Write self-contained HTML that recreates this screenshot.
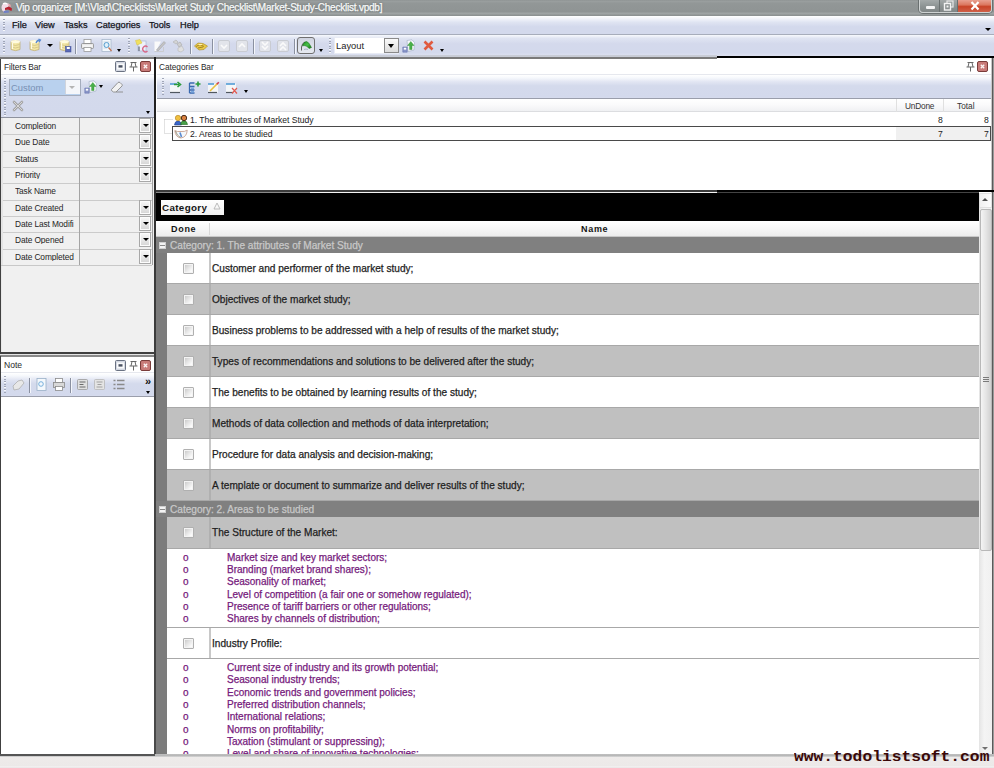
<!DOCTYPE html>
<html><head><meta charset="utf-8">
<style>
*{margin:0;padding:0;box-sizing:border-box}
html,body{width:994px;height:768px;overflow:hidden;background:#ece9e8;font-family:"Liberation Sans",sans-serif;font-size:11px;color:#222}
.a{position:absolute}
.t{position:absolute;white-space:pre;line-height:1}
.k{-webkit-text-stroke:0.25px currentColor}
.p{font-size:8.4px;color:#2a2a2a}
.g{font-size:10.1px;color:#1a1a1a}
.pu{font-size:10px;color:#761a7c}
.grip{position:absolute;width:2px;background:repeating-linear-gradient(#a0a6b8 0 1px,#f8f9fc 1px 1.6px,transparent 1.6px 2.6px)}
.sep{position:absolute;width:2px;background:#8a90a0;border-right:1px solid #f4f6fb}
.arr{position:absolute;width:0;height:0;border-left:3px solid transparent;border-right:3px solid transparent;border-top:3px solid #000}
.cb{position:absolute;width:11px;height:11px;border:1px solid #b0b0b0;border-radius:1px;box-shadow:inset 0 0 0 1px #f4f4f4;background:linear-gradient(135deg,#c4c4c4,#e8e8e8 50%,#fbfbfb 80%);}
.dd{position:absolute;width:12px;height:15px;border:1px solid #a8a8a8;box-shadow:inset 0 0 0 1px #fcfcfc;background:linear-gradient(#f8f8f8,#e8e8e8 50%,#d4d4d4)}
.dd:after{content:"";position:absolute;left:2.5px;top:5px;border-left:3.5px solid transparent;border-right:3.5px solid transparent;border-top:3.5px solid #000}
svg{position:absolute;overflow:visible}
</style></head><body>

<div class="a" style="left:0px;top:0px;width:994px;height:16px;background:linear-gradient(#8e9393 0,#9a9f9f 8%,#929797 20%,#8f9494 72%,#9fa4a4 84%,#898e8e 100%)"></div>
<svg style="left:0px;top:1px" width="14" height="14" viewBox="0 0 14 14"><path d="M1.5 6 Q2 2 6 2 Q9 2 10 4 L7 7 L4 11 Q1.5 10 1.5 6Z" fill="#f2dce6"/><path d="M3 3 Q5 1.5 7 3" stroke="#fff" stroke-width="1.5" fill="none"/><path d="M5 7 L9 5.5 L12 7.5 L11.5 10 L8 8.5 L5 9Z" fill="#b8202e"/><path d="M8 3 L10.5 3.5 L11 6 L9 5.5Z" fill="#e8a0a8"/><path d="M3.5 10 L8.5 9.5 L9 11.5 L4 12Z" fill="#7080c8"/></svg>
<div class="t k" style="left:16px;top:3px;font-size:10px;letter-spacing:-0.22px;color:#f8fafa;text-shadow:0 0 2px #5a6060">Vip organizer [M:\Vlad\Checklists\Market Study Checklist\Market-Study-Checklist.vpdb]</div>
<div class="a" style="left:919px;top:0px;width:73px;height:13px;border:1px solid #cfd3d3;border-top:none;border-radius:0 0 4px 4px;background:linear-gradient(#a4a9a9,#8e9494 50%,#808686);box-shadow:0 0 0 1px #6a7070"></div>
<div class="a" style="left:939px;top:0px;width:1px;height:12px;background:#6a7070"></div>
<div class="a" style="left:957px;top:0px;width:1px;height:12px;background:#6a7070"></div>
<div class="a" style="left:958px;top:0px;width:33px;height:12px;border-radius:0 0 3px 0;background:linear-gradient(#e8a090,#dc7860 40%,#c84428 55%,#d06048)"></div>
<div class="a" style="left:926px;top:6px;width:9px;height:3px;background:#f4f4f4;border-radius:1px"></div>
<svg style="left:943px;top:0px" width="11" height="11" viewBox="0 0 11 11"><rect x="4" y="1" width="6" height="6" fill="none" stroke="#e8e8e8" stroke-width="1.2"/><rect x="1.5" y="3.5" width="6" height="6.5" fill="#8a9090" stroke="#f4f4f4" stroke-width="1.4"/><rect x="3.5" y="5.5" width="2" height="2" fill="#f4f4f4"/></svg>
<svg style="left:970px;top:1px" width="10" height="10" viewBox="0 0 10 10"><path d="M1.5 1L8.5 8.5M8.5 1L1.5 8.5" stroke="#fff" stroke-width="2.2"/></svg>
<div class="a" style="left:0px;top:16px;width:994px;height:19px;background:linear-gradient(#ffffff 0,#f2f4fa 15%,#dfe4f2 35%,#d3d9ec 60%,#d3d9ec 100%);border-bottom:1px solid #a7adbb"></div>
<div class="grip" style="left:3px;top:19px;height:13px"></div>
<div class="t k" style="left:12px;top:21px;font-size:9.2px;color:#141420">File</div>
<div class="t k" style="left:35px;top:21px;font-size:9.2px;color:#141420">View</div>
<div class="t k" style="left:64px;top:21px;font-size:9.2px;color:#141420">Tasks</div>
<div class="t k" style="left:96px;top:21px;font-size:9.2px;color:#141420">Categories</div>
<div class="t k" style="left:149px;top:21px;font-size:9.2px;color:#141420">Tools</div>
<div class="t k" style="left:180px;top:21px;font-size:9.2px;color:#141420">Help</div>
<div class="arr" style="left:985px;top:28px;border-left-width:3px;border-right-width:3px;border-top-width:3px"></div>
<div class="a" style="left:0px;top:35px;width:994px;height:22px;background:linear-gradient(#f7f9fd 0,#dfe4f2 15%,#d4d9ec 40%,#d3d9ec 80%,#dde1f1 96%,#b9bdcc 100%)"></div>
<div class="grip" style="left:3px;top:38px;height:16px"></div>
<svg style="left:10px;top:39px" width="12" height="13" viewBox="0 0 12 13"><path d="M1 2.5 Q5.5 0.5 10 2.5 V10.5 Q5.5 12.8 1 10.5Z" fill="#f2e6a4" stroke="#bfae7a" stroke-width="0.8"/><ellipse cx="5.5" cy="2.6" rx="4.5" ry="1.6" fill="#fffbe0"/><path d="M1.5 5.5 Q5.5 7.5 9.5 5.5 M1.5 8 Q5.5 10 9.5 8" stroke="#cdbb80" stroke-width="0.7" fill="none"/><path d="M2.5 4 V10" stroke="#fffbe8" stroke-width="1.2"/></svg>
<svg style="left:29px;top:39px" width="12" height="13" viewBox="0 0 12 13"><path d="M1 2.5 Q5.5 0.5 10 2.5 V10.5 Q5.5 12.8 1 10.5Z" fill="#f2e6a4" stroke="#bfae7a" stroke-width="0.8"/><ellipse cx="5.5" cy="2.6" rx="4.5" ry="1.6" fill="#fffbe0"/><path d="M1.5 5.5 Q5.5 7.5 9.5 5.5 M1.5 8 Q5.5 10 9.5 8" stroke="#cdbb80" stroke-width="0.7" fill="none"/><path d="M2.5 4 V10" stroke="#fffbe8" stroke-width="1.2"/><path d="M7 4 Q8 1 11 1 M9.5 0 L11.5 1 L10 3" stroke="#5a8ad0" stroke-width="1.3" fill="none"/></svg>
<div class="arr" style="left:47px;top:44px;border-left-width:3px;border-right-width:3px;border-top-width:3px"></div>
<svg style="left:59px;top:39px" width="12" height="13" viewBox="0 0 12 13"><path d="M1 2.5 Q5.5 0.5 10 2.5 V10.5 Q5.5 12.8 1 10.5Z" fill="#f2e6a4" stroke="#bfae7a" stroke-width="0.8"/><ellipse cx="5.5" cy="2.6" rx="4.5" ry="1.6" fill="#fffbe0"/><path d="M1.5 5.5 Q5.5 7.5 9.5 5.5 M1.5 8 Q5.5 10 9.5 8" stroke="#cdbb80" stroke-width="0.7" fill="none"/><path d="M2.5 4 V10" stroke="#fffbe8" stroke-width="1.2"/><rect x="6.5" y="7.5" width="5.5" height="5.5" fill="#5a6ab8" stroke="#3a4a90" stroke-width="0.5"/><rect x="7.8" y="8" width="3" height="2" fill="#fff"/></svg>
<div class="sep" style="left:75px;top:39px;height:15px"></div>
<svg style="left:81px;top:39px" width="13" height="13" viewBox="0 0 13 13"><rect x="3" y="0.5" width="7" height="4" fill="#fff" stroke="#9a9a9a" stroke-width="0.8"/><rect x="0.5" y="4.5" width="12" height="5" rx="1" fill="#e8e8e8" stroke="#8a8a8a" stroke-width="0.8"/><path d="M1.5 7 H11.5" stroke="#fff" stroke-width="1"/><rect x="3" y="8.5" width="7" height="4" fill="#fff" stroke="#9a9a9a" stroke-width="0.8"/></svg>
<svg style="left:101px;top:39px" width="12" height="13" viewBox="0 0 12 13"><rect x="1" y="0.5" width="9" height="12" fill="#f4f8fc" stroke="#a8b8cc" stroke-width="0.8"/><path d="M2.5 3H8.5M2.5 5H8.5M2.5 7H8.5M2.5 9H6" stroke="#b8c8d8" stroke-width="0.7"/><circle cx="5.5" cy="6" r="2.5" fill="#dff0fa" stroke="#5aa0d0" stroke-width="1"/><path d="M7.5 8.5 L10.5 12" stroke="#c07050" stroke-width="1.2"/></svg>
<div class="arr" style="left:117px;top:49px;border-left-width:2.5px;border-right-width:2.5px;border-top-width:3px"></div>
<div class="grip" style="left:128px;top:38px;height:16px"></div>
<svg style="left:135px;top:39px" width="14" height="14" viewBox="0 0 14 14"><rect x="3" y="2" width="8" height="10" fill="#eef2fa" stroke="#a8b8d4" stroke-width="0.7"/><path d="M0.5 1.5 L5 0.5 L7 4 L2 6Z" fill="#f0e060" stroke="#d8c040" stroke-width="0.5"/><path d="M4 7.5 V12" stroke="#6a7080" stroke-width="1.3"/><path d="M12.5 8 A2.8 2.8 0 1 0 12.5 12" stroke="#d86a8a" stroke-width="1.3" fill="none"/></svg>
<svg style="left:154px;top:40px" width="12" height="12" viewBox="0 0 12 12"><path d="M0.5 1.5 H7 L2 11 H0.5Z" fill="#fafafa"/><path d="M0.5 11.5 H9.5 V7" stroke="#c8c8c8" stroke-width="0.8" fill="none"/><path d="M2.5 10 L10 1.5 L11.5 3 L4 11Z" fill="#c4c4c4" stroke="#9a9a9a" stroke-width="0.5"/></svg>
<svg style="left:172px;top:39px" width="13" height="14" viewBox="0 0 13 14"><path d="M1 3 L4 1 L6 3 L4 5Z" fill="#d4d4d4" stroke="#b0b0b0" stroke-width="0.6"/><path d="M5 5 L8 3 L10 6 L7 8Z" fill="#d0d0d0" stroke="#a8a8a8" stroke-width="0.6"/><path d="M6 9 L10 7 L12 11 L9 13 L6 12Z" fill="#e0e0e0" stroke="#b8b8b8" stroke-width="0.6"/></svg>
<div class="sep" style="left:190px;top:39px;height:15px"></div>
<svg style="left:194px;top:41px" width="14" height="11" viewBox="0 0 14 11"><path d="M0.5 5 L4 2 L9 2.5 L13.5 5 L10 8.5 L5 9Z" fill="#e8c848" stroke="#a88820" stroke-width="0.6"/><path d="M2 5.5 L6 3.5 L10 5.5 M4 7 L9 6" stroke="#8a6a10" stroke-width="0.7" fill="none"/><path d="M4.5 3.5 L8 3.5" stroke="#fff0b0" stroke-width="1"/></svg>
<div class="sep" style="left:212px;top:39px;height:15px"></div>
<svg style="left:218px;top:40px" width="12" height="12" viewBox="0 0 12 12"><rect x="0.5" y="0.5" width="11" height="11" rx="1.5" fill="#e2e4ea" stroke="#c4c6cc" stroke-width="0.8"/><path d="M3 5 L6 8 L9 5 " stroke="#fafafa" stroke-width="1.6" fill="none"/></svg>
<svg style="left:236px;top:40px" width="12" height="12" viewBox="0 0 12 12"><rect x="0.5" y="0.5" width="11" height="11" rx="1.5" fill="#e2e4ea" stroke="#c4c6cc" stroke-width="0.8"/><path d="M3 7 L6 4 L9 7 " stroke="#fafafa" stroke-width="1.6" fill="none"/></svg>
<div class="sep" style="left:253px;top:39px;height:15px"></div>
<svg style="left:259px;top:40px" width="12" height="12" viewBox="0 0 12 12"><rect x="0.5" y="0.5" width="11" height="11" rx="1.5" fill="#e2e4ea" stroke="#c4c6cc" stroke-width="0.8"/><path d="M3 6 L6 9 L9 6 M3 2 L6 5 L9 2" stroke="#fafafa" stroke-width="1.6" fill="none"/></svg>
<svg style="left:277px;top:40px" width="12" height="12" viewBox="0 0 12 12"><rect x="0.5" y="0.5" width="11" height="11" rx="1.5" fill="#e2e4ea" stroke="#c4c6cc" stroke-width="0.8"/><path d="M3 6 L6 3 L9 6 M3 10 L6 7 L9 10" stroke="#fafafa" stroke-width="1.6" fill="none"/></svg>
<div class="sep" style="left:294px;top:39px;height:15px"></div>
<div class="a" style="left:297px;top:37px;width:18px;height:17px;border:1.5px solid #707070;border-radius:3px;background:linear-gradient(#d0d4e0,#dfe3ec 60%,#e6e9f0)"></div>
<svg style="left:299px;top:39px" width="14" height="13" viewBox="0 0 14 13"><defs><linearGradient id="tg" x1="0" y1="0" x2="1" y2="1"><stop offset="0" stop-color="#1e8a1e"/><stop offset="0.5" stop-color="#48c048"/><stop offset="1" stop-color="#107010"/></linearGradient></defs><path d="M2.5 11.5 V8 Q3 4 6 3" stroke="#505050" stroke-width="0.9" fill="none"/><path d="M3.5 7 Q4.5 2.5 7.5 2.5 Q9.5 2.5 12.5 8.5 L10 9.5 Q8 6.5 5 6.5 Z" fill="url(#tg)" stroke="#1a6a1a" stroke-width="0.5"/><path d="M5 10.5 Q7 9.5 9 10.5" stroke="#9ab" stroke-width="0.8" fill="none"/></svg>
<div class="arr" style="left:319px;top:49px;border-left-width:2.5px;border-right-width:2.5px;border-top-width:3px"></div>
<div class="grip" style="left:329px;top:38px;height:16px"></div>
<div class="a" style="left:334px;top:37px;width:65px;height:17px;background:#fff;border:1px solid #e8ebf4"></div>
<div class="a" style="left:384px;top:38px;width:15px;height:15px;border:1px solid #8a8a8a;background:linear-gradient(#fafafa,#dcdcdc)"></div>
<div class="arr" style="left:388px;top:44px;border-left-width:3.5px;border-right-width:3.5px;border-top-width:4px"></div>
<div class="t " style="left:336px;top:41px;font-size:9.4px;color:#1e1e1e">Layout</div>
<svg style="left:402px;top:39px" width="14" height="14" viewBox="0 0 14 14"><path d="M5 1.5 L10 0.8 L12.5 3.5 L12 11 L6 12.5Z" fill="#f6f8fb" stroke="#a8b4c8" stroke-width="0.7"/><path d="M8.8 2.5 L12 6.5 H10 V10.5 H7.6 V6.5 H5.6Z" fill="#4ab04a" stroke="#2a8a2a" stroke-width="0.4"/><path d="M0.8 8 H5.2 V13.2 H0.8Z" fill="#8a96c8" stroke="#5a68a8" stroke-width="0.5"/><rect x="1.8" y="8.8" width="2.4" height="1.8" fill="#fff"/></svg>
<svg style="left:423px;top:40px" width="11" height="11" viewBox="0 0 11 11"><path d="M1.5 1.5L9.5 9.5M9.5 1.5L1.5 9.5" stroke="#e05a40" stroke-width="2.6"/></svg>
<div class="arr" style="left:440px;top:49px;border-left-width:2.5px;border-right-width:2.5px;border-top-width:3px"></div>
<div class="a" style="left:0px;top:58px;width:156px;height:297px;background:#f0f0f0"></div>
<div class="a" style="left:0px;top:58px;width:1px;height:297px;background:#404040"></div>
<div class="a" style="left:1px;top:75px;width:1px;height:280px;background:#e8e8e8"></div>
<div class="a" style="left:154px;top:57px;width:2px;height:698px;background:#262626"></div>
<div class="a" style="left:1px;top:58px;width:153px;height:17px;background:#fff"></div>
<div class="t " style="left:4px;top:63px;font-size:8.4px;color:#2a2a2a;letter-spacing:-0.1px">Filters Bar</div>
<svg style="left:115px;top:61px" width="11" height="11" viewBox="0 0 11 11"><rect x="0.5" y="0.5" width="10" height="10" rx="1" fill="#d4d8e2" stroke="#6a7282" stroke-width="1"/><rect x="2" y="2.5" width="7" height="6" fill="#fafbfc"/><rect x="3.5" y="4.2" width="4" height="2.4" fill="#4a5262"/></svg>
<svg style="left:129px;top:61px" width="9" height="11" viewBox="0 0 9 11"><path d="M1.5 1.5 H7.5 M3 1.5 L2 6 M6 1.5 L7 6 M0.5 6 H8.5 M4.5 6 V10.5" stroke="#686868" stroke-width="1" fill="none"/></svg>
<svg style="left:140px;top:61px" width="11" height="11" viewBox="0 0 11 11"><rect x="0.5" y="0.5" width="10" height="10" rx="1.5" fill="#c87a78" stroke="#7a3c3a" stroke-width="1"/><path d="M3.8 3.8L7.2 7.2M7.2 3.8L3.8 7.2" stroke="#fbf4f4" stroke-width="1.3"/></svg>
<div class="a" style="left:1px;top:74px;width:153px;height:1px;background:#e6e8ee"></div>
<div class="a" style="left:1px;top:75px;width:153px;height:43px;background:linear-gradient(#ffffff 0,#f4f6fb 6%,#e0e4f2 14%,#d4daec 24%,#d3d9ec 90%,#dadeef 100%)"></div>
<div class="a" style="left:1px;top:117px;width:153px;height:1px;background:#8e929e"></div>
<div class="grip" style="left:4px;top:78px;height:38px"></div>
<div class="a" style="left:9px;top:79px;width:72px;height:17px;border:1px solid #a4acbc;background:#b9d1ee"></div>
<div class="a" style="left:65px;top:80px;width:15px;height:14px;background:#f4f6fa;border-left:1px solid #d0d4dc"></div>
<div class="arr" style="left:69px;top:86px;border-top-color:#b4b4b4;border-left-width:3.5px;border-right-width:3.5px;border-top-width:3.5px"></div>
<div class="t " style="left:11px;top:83px;font-size:9.4px;color:#7890b4">Custom</div>
<svg style="left:84px;top:80px" width="14" height="14" viewBox="0 0 14 14"><path d="M5 1.5 L10 0.8 L12.5 3.5 L12 11 L6 12.5Z" fill="#f6f8fb" stroke="#a8b4c8" stroke-width="0.7"/><path d="M8.8 2.5 L12 6.5 H10 V10.5 H7.6 V6.5 H5.6Z" fill="#4ab04a" stroke="#2a8a2a" stroke-width="0.4"/><path d="M0.8 8 H5.2 V13.2 H0.8Z" fill="#8a96c8" stroke="#5a68a8" stroke-width="0.5"/><rect x="1.8" y="8.8" width="2.4" height="1.8" fill="#fff"/></svg>
<div class="arr" style="left:99px;top:85px;border-left-width:2.5px;border-right-width:2.5px;border-top-width:3px"></div>
<svg style="left:110px;top:81px" width="14" height="12" viewBox="0 0 14 12"><path d="M1.5 8.5 L8 1.5 Q9 0.8 10 1.5 L12 3.5 Q12.6 4.3 12 5 L6 11 H3.5 L1.5 9.5Z" fill="#f2f2f2" stroke="#8a8a8a" stroke-width="0.9"/><path d="M6 11 H13" stroke="#8a8a8a" stroke-width="0.9"/></svg>
<svg style="left:12px;top:100px" width="12" height="12" viewBox="0 0 12 12"><path d="M2 2L10 10M10 2L2 10" stroke="#a4a4a4" stroke-width="2.6" stroke-linecap="round"/><path d="M2 2L10 10M10 2L2 10" stroke="#d8d8d8" stroke-width="1" stroke-linecap="round"/></svg>
<div class="arr" style="left:146px;top:111px;border-left-width:2.5px;border-right-width:2.5px;border-top-width:3px"></div>
<div class="t" style="left:15px;top:122px;font-size:8.4px;color:#262626;letter-spacing:-0.12px;width:64px;overflow:hidden">Completion</div>
<div class="dd" style="left:139px;top:118px"></div>
<div class="a" style="left:1px;top:134px;width:151px;height:1px;background:#cbcbcb"></div>
<div class="t" style="left:15px;top:138px;font-size:8.4px;color:#262626;letter-spacing:-0.12px;width:64px;overflow:hidden">Due Date</div>
<div class="dd" style="left:139px;top:134px"></div>
<div class="a" style="left:1px;top:151px;width:151px;height:1px;background:#cbcbcb"></div>
<div class="t" style="left:15px;top:155px;font-size:8.4px;color:#262626;letter-spacing:-0.12px;width:64px;overflow:hidden">Status</div>
<div class="dd" style="left:139px;top:151px"></div>
<div class="a" style="left:1px;top:167px;width:151px;height:1px;background:#cbcbcb"></div>
<div class="t" style="left:15px;top:171px;font-size:8.4px;color:#262626;letter-spacing:-0.12px;width:64px;overflow:hidden">Priority</div>
<div class="dd" style="left:139px;top:167px"></div>
<div class="a" style="left:1px;top:183px;width:151px;height:1px;background:#cbcbcb"></div>
<div class="t" style="left:15px;top:187px;font-size:8.4px;color:#262626;letter-spacing:-0.12px;width:64px;overflow:hidden">Task Name</div>
<div class="a" style="left:1px;top:200px;width:151px;height:1px;background:#cbcbcb"></div>
<div class="t" style="left:15px;top:204px;font-size:8.4px;color:#262626;letter-spacing:-0.12px;width:64px;overflow:hidden">Date Created</div>
<div class="dd" style="left:139px;top:200px"></div>
<div class="a" style="left:1px;top:216px;width:151px;height:1px;background:#cbcbcb"></div>
<div class="t" style="left:15px;top:220px;font-size:8.4px;color:#262626;letter-spacing:-0.12px;width:64px;overflow:hidden">Date Last Modifi</div>
<div class="dd" style="left:139px;top:216px"></div>
<div class="a" style="left:1px;top:232px;width:151px;height:1px;background:#cbcbcb"></div>
<div class="t" style="left:15px;top:236px;font-size:8.4px;color:#262626;letter-spacing:-0.12px;width:64px;overflow:hidden">Date Opened</div>
<div class="dd" style="left:139px;top:232px"></div>
<div class="a" style="left:1px;top:249px;width:151px;height:1px;background:#cbcbcb"></div>
<div class="t" style="left:15px;top:253px;font-size:8.4px;color:#262626;letter-spacing:-0.12px;width:64px;overflow:hidden">Date Completed</div>
<div class="dd" style="left:139px;top:249px"></div>
<div class="a" style="left:1px;top:265px;width:151px;height:1px;background:#c8c8c8"></div>
<div class="a" style="left:79px;top:118px;width:1px;height:147px;background:#a4a4a4"></div>
<div class="a" style="left:152px;top:118px;width:1px;height:147px;background:#a0a0a0"></div>
<div class="a" style="left:1px;top:118px;width:2px;height:147px;background:#e4e4e4"></div>
<div class="a" style="left:0px;top:352px;width:154px;height:2px;background:#404040"></div>
<div class="a" style="left:0px;top:354px;width:154px;height:2px;background:#e4e4e4"></div>
<div class="a" style="left:0px;top:355px;width:154px;height:2px;background:#8a8a8a"></div>
<div class="a" style="left:0px;top:357px;width:154px;height:398px;background:#fff"></div>
<div class="a" style="left:0px;top:356px;width:1px;height:399px;background:#404040"></div>
<div class="a" style="left:154px;top:57px;width:2px;height:698px;background:#262626"></div>
<div class="t " style="left:4px;top:361px;font-size:8.6px;color:#2a2a2a">Note</div>
<svg style="left:115px;top:360px" width="11" height="11" viewBox="0 0 11 11"><rect x="0.5" y="0.5" width="10" height="10" rx="1" fill="#d4d8e2" stroke="#6a7282" stroke-width="1"/><rect x="2" y="2.5" width="7" height="6" fill="#fafbfc"/><rect x="3.5" y="4.2" width="4" height="2.4" fill="#4a5262"/></svg>
<svg style="left:129px;top:360px" width="9" height="11" viewBox="0 0 9 11"><path d="M1.5 1.5 H7.5 M3 1.5 L2 6 M6 1.5 L7 6 M0.5 6 H8.5 M4.5 6 V10.5" stroke="#686868" stroke-width="1" fill="none"/></svg>
<svg style="left:140px;top:360px" width="11" height="11" viewBox="0 0 11 11"><rect x="0.5" y="0.5" width="10" height="10" rx="1.5" fill="#c87a78" stroke="#7a3c3a" stroke-width="1"/><path d="M3.8 3.8L7.2 7.2M7.2 3.8L3.8 7.2" stroke="#fbf4f4" stroke-width="1.3"/></svg>
<div class="a" style="left:1px;top:372px;width:153px;height:1px;background:#e6e8ee"></div>
<div class="a" style="left:1px;top:373px;width:153px;height:24px;background:linear-gradient(#ffffff 0,#f6f8fc 12%,#e2e6f3 28%,#d4daec 45%,#d3d9ec 90%,#d9ddef 100%)"></div>
<div class="a" style="left:1px;top:396px;width:153px;height:1px;background:#9a9eab"></div>
<div class="grip" style="left:4px;top:376px;height:18px"></div>
<svg style="left:12px;top:378px" width="13" height="13" viewBox="0 0 13 13"><path d="M1 8 L6 3 L10 2 L12 5 L7 11 L2 12Z" fill="#e8e8e8" stroke="#b0b0b0" stroke-width="0.8"/></svg>
<div class="sep" style="left:29px;top:378px;height:15px"></div>
<svg style="left:36px;top:378px" width="11" height="13" viewBox="0 0 11 13"><rect x="1" y="0.5" width="9" height="12" fill="#f4f8fc" stroke="#9ab0c8" stroke-width="0.8"/><circle cx="5" cy="6" r="2.3" fill="none" stroke="#6aa8d8" stroke-width="0.9"/></svg>
<svg style="left:53px;top:378px" width="12" height="13" viewBox="0 0 12 13"><rect x="2.5" y="0.5" width="7" height="4" fill="#fff" stroke="#8a8a8a" stroke-width="0.8"/><rect x="0.5" y="4.5" width="11" height="5" fill="#d8d8d8" stroke="#8a8a8a" stroke-width="0.8"/><rect x="2.5" y="8.5" width="7" height="4" fill="#fff" stroke="#8a8a8a" stroke-width="0.8"/></svg>
<div class="sep" style="left:70px;top:378px;height:15px"></div>
<svg style="left:77px;top:379px" width="11" height="11" viewBox="0 0 11 11"><rect x="0.5" y="0.5" width="10" height="10" rx="1" fill="#e0e0e0" stroke="#9a9a9a" stroke-width="0.8"/><path d="M2.5 3H8.5M2.5 5.5H6.5M2.5 8H8.5" stroke="#6a6a6a" stroke-width="1"/></svg>
<svg style="left:94px;top:379px" width="11" height="11" viewBox="0 0 11 11"><rect x="0.5" y="0.5" width="10" height="10" rx="1" fill="#e4e4e4" stroke="#b8b8b8" stroke-width="0.8"/><path d="M2.5 3H8.5M3.5 5.5H7.5M2.5 8H8.5" stroke="#a0a0a0" stroke-width="1"/></svg>
<svg style="left:113px;top:379px" width="12" height="11" viewBox="0 0 12 11"><path d="M0.5 1.5H2.5M0.5 5.5H2.5M0.5 9.5H2.5M4 1.5H11.5M4 5.5H11.5M4 9.5H11.5" stroke="#8a8a8a" stroke-width="1.4"/></svg>
<div class="t " style="left:145px;top:376px;font-size:11px;font-weight:bold;color:#111">»</div>
<div class="arr" style="left:146px;top:391px;border-left-width:2.5px;border-right-width:2.5px;border-top-width:3px"></div>
<div class="a" style="left:156px;top:57px;width:838px;height:136px;background:#fff"></div>
<div class="a" style="left:156px;top:58px;width:838px;height:1px;background:#fff"></div>
<div class="a" style="left:991px;top:57px;width:1px;height:136px;background:#c8c8c8"></div>
<div class="a" style="left:992px;top:57px;width:1px;height:136px;background:#5a5a5a"></div>
<div class="a" style="left:993px;top:57px;width:1px;height:136px;background:#9a9a9a"></div>
<div class="a" style="left:156px;top:190px;width:561px;height:2px;background:#3c3c3c"></div>
<div class="a" style="left:717px;top:190px;width:277px;height:2px;background:#000"></div>
<div class="a" style="left:156px;top:192px;width:154px;height:1px;background:#8a8a8a"></div>
<div class="a" style="left:310px;top:192px;width:407px;height:1px;background:#f4f4f4"></div>
<div class="a" style="left:717px;top:192px;width:262px;height:1px;background:#444"></div>
<div class="t " style="left:159px;top:63px;font-size:8.3px;color:#2a2a2a;letter-spacing:-0.05px">Categories Bar</div>
<svg style="left:966px;top:61px" width="9" height="11" viewBox="0 0 9 11"><path d="M1.5 1.5 H7.5 M3 1.5 L2 6 M6 1.5 L7 6 M0.5 6 H8.5 M4.5 6 V10.5" stroke="#686868" stroke-width="1" fill="none"/></svg>
<svg style="left:977px;top:61px" width="11" height="11" viewBox="0 0 11 11"><rect x="0.5" y="0.5" width="10" height="10" rx="1.5" fill="#c87a78" stroke="#7a3c3a" stroke-width="1"/><path d="M3.8 3.8L7.2 7.2M7.2 3.8L3.8 7.2" stroke="#fbf4f4" stroke-width="1.3"/></svg>
<div class="a" style="left:157px;top:74px;width:834px;height:1px;background:#e6e8ee"></div>
<div class="a" style="left:157px;top:75px;width:834px;height:24px;background:linear-gradient(#ffffff 0,#f6f8fc 12%,#e2e6f3 28%,#d4daec 45%,#d3d9ec 90%,#d9ddef 100%)"></div>
<div class="a" style="left:157px;top:98px;width:834px;height:1px;background:#9a9eab"></div>
<div class="grip" style="left:162px;top:78px;height:18px"></div>
<svg style="left:169px;top:81px" width="13" height="13" viewBox="0 0 13 13"><rect x="1" y="2.5" width="10" height="9" fill="#f4f6f8"/><path d="M1 3H8" stroke="#3a90d0" stroke-width="1.4"/><path d="M1 11.5H11" stroke="#505860" stroke-width="1.2"/><path d="M5 3.5H10M8.5 1L11.5 3.5L8.5 6" stroke="#2a9a3a" stroke-width="1.6" fill="none"/></svg>
<svg style="left:188px;top:81px" width="13" height="13" viewBox="0 0 13 13"><path d="M1.5 2H6.5M1.5 2V12M1.5 5.5H6.5M1.5 9H6.5M1.5 12H6.5" stroke="#3a6ab0" stroke-width="1.3" fill="none"/><rect x="3" y="6.5" width="3" height="1.5" fill="#7aa8e0"/><rect x="3" y="10" width="3" height="1.5" fill="#7aa8e0"/><path d="M10 0.5V5.5M7.5 3H12.5" stroke="#2a9a3a" stroke-width="1.6"/></svg>
<svg style="left:207px;top:81px" width="13" height="13" viewBox="0 0 13 13"><rect x="1" y="2.5" width="10" height="9" fill="#f4f6f8"/><path d="M1 3H7" stroke="#3a90d0" stroke-width="1.4"/><path d="M1 11.5H10" stroke="#505860" stroke-width="1.2"/><path d="M3 10 L10.5 2.5" stroke="#e8c040" stroke-width="1.6"/><path d="M9.8 3.2 L11.8 1.2" stroke="#d04050" stroke-width="1.6"/></svg>
<svg style="left:225px;top:81px" width="13" height="13" viewBox="0 0 13 13"><rect x="1" y="2.5" width="10" height="9" fill="#f4f6f8"/><path d="M1 3H10" stroke="#3a90d0" stroke-width="1.4"/><path d="M1 11.5H8" stroke="#505860" stroke-width="1.2"/><path d="M7 7L12 12.5M12 7L7 12.5" stroke="#e05a50" stroke-width="1.2"/></svg>
<div class="arr" style="left:244px;top:90px;border-left-width:2.5px;border-right-width:2.5px;border-top-width:3px"></div>
<div class="a" style="left:157px;top:99px;width:834px;height:13px;background:linear-gradient(#ffffff,#fafafb 50%,#f0f1f3);border-bottom:1px solid #dcdde0"></div>
<div class="a" style="left:896px;top:99px;width:1px;height:13px;background:#e0e0e0"></div>
<div class="a" style="left:943px;top:99px;width:1px;height:13px;background:#e0e0e0"></div>
<div class="t " style="left:905px;top:102px;font-size:8.3px;color:#333;letter-spacing:-0.2px">UnDone</div>
<div class="t " style="left:957px;top:102px;font-size:8.3px;color:#333">Total</div>
<svg style="left:164px;top:118px" width="12" height="20" viewBox="0 0 12 20"><path d="M0.5 1.5H9M0.5 1.5V15.5H8" stroke="#c4c4c4" stroke-width="1" stroke-dasharray="1 1" fill="none"/></svg>
<svg style="left:174px;top:114px" width="14" height="12" viewBox="0 0 14 12"><path d="M0.5 11 Q0.8 7 4 7 Q7 7 7.5 11Z" fill="#3a66c8" stroke="#24408a" stroke-width="0.6"/><path d="M6.5 10.5 Q7 6.8 10 6.8 Q13 6.8 13.5 10.5Z" fill="#48a048" stroke="#206a20" stroke-width="0.6"/><circle cx="4" cy="4" r="2.7" fill="#f0c040" stroke="#b08020" stroke-width="0.6"/><circle cx="10" cy="4" r="2.7" fill="#d88040" stroke="#3a2010" stroke-width="0.9"/></svg>
<div class="t " style="left:190px;top:116px;font-size:8.6px;color:#222;letter-spacing:-0.03px">1. The attributes of Market Study</div>
<div class="t " style="left:938px;top:116px;font-size:8.6px;color:#222">8</div>
<div class="t " style="left:984px;top:116px;font-size:8.6px;color:#222">8</div>
<div class="a" style="left:896px;top:127px;width:95px;height:13px;background:#f0f0f0"></div>
<div class="a" style="left:172px;top:126px;width:819px;height:15px;border:1px solid #4a4a4a;border-top-width:1.5px"></div>
<svg style="left:174px;top:129px" width="14" height="10" viewBox="0 0 14 10"><path d="M0.8 1.5 Q3 3 7 2.5 Q11 3 13.2 1 Q13 8 7 9 Q1.5 8.5 0.8 1.5Z" fill="#f4f8fc" stroke="#c8a090" stroke-width="0.9"/><path d="M1.5 2 Q3 7 6.5 8.5" stroke="#8a8a70" stroke-width="0.8" fill="none"/><path d="M6 3.5 L7.5 8" stroke="#5a8ad0" stroke-width="1.6"/></svg>
<div class="t " style="left:190px;top:130px;font-size:8.6px;color:#222;letter-spacing:-0.03px">2. Areas to be studied</div>
<div class="t " style="left:938px;top:130px;font-size:8.6px;color:#222">7</div>
<div class="t " style="left:984px;top:130px;font-size:8.6px;color:#222">7</div>
<div class="a" style="left:156px;top:193px;width:838px;height:562px;background:#fff"></div>
<div class="a" style="left:154px;top:193px;width:2px;height:562px;background:#262626"></div>
<div class="a" style="left:992px;top:193px;width:1px;height:562px;background:#5a5a5a"></div>
<div class="a" style="left:993px;top:193px;width:1px;height:562px;background:#9a9a9a"></div>
<div class="a" style="left:156px;top:193px;width:823px;height:28px;background:#000"></div>
<div class="a" style="left:161px;top:200px;width:63px;height:15px;background:linear-gradient(#fefefe,#f0f0f0)"></div>
<div class="t " style="left:162px;top:203px;font-size:9.8px;font-weight:bold;color:#141414;letter-spacing:0.35px">Category</div>
<svg style="left:213px;top:202px" width="8" height="8" viewBox="0 0 8 8"><path d="M4 1 L7 7 H1Z" fill="none" stroke="#b4b4b4" stroke-width="0.9"/></svg>
<div class="a" style="left:156px;top:221px;width:823px;height:15px;background:linear-gradient(#ffffff,#f7f7f7 50%,#ececec)"></div>
<div class="a" style="left:156px;top:236px;width:823px;height:1px;background:#c8c8c8"></div>
<div class="a" style="left:209px;top:223px;width:1px;height:12px;background:#d8d8d8"></div>
<div class="t " style="left:171px;top:225px;font-size:9px;font-weight:bold;color:#141414;letter-spacing:0.7px">Done</div>
<div class="t " style="left:581px;top:225px;font-size:9px;font-weight:bold;color:#141414;letter-spacing:0.7px">Name</div>
<div class="a" style="left:156px;top:237px;width:823px;height:16px;background:#808080"></div>
<div class="a" style="left:159px;top:242px;width:7px;height:7px;background:#f4f4f4;border:1px solid #d0d0d0"></div>
<div class="a" style="left:160px;top:245px;width:5px;height:1px;background:#8a8a8a"></div>
<div class="t k" style="left:170px;top:241px;font-size:10.1px;color:#c8c8c8">Category: 1. The attributes of Market Study</div>
<div class="a" style="left:156px;top:253px;width:11px;height:248px;background:#7c7c7c"></div>
<div class="a" style="left:167px;top:253px;width:812px;height:30px;background:#fff"></div>
<div class="a" style="left:167px;top:283px;width:812px;height:1px;background:#a8a8a8"></div>
<div class="a" style="left:209px;top:253px;width:2px;height:30px;background:#c8c8c8"></div>
<div class="cb" style="left:183px;top:263px"></div>
<div class="t k" style="left:212px;top:264px;font-size:10.1px;color:#1e1e1e">Customer and performer of the market study;</div>
<div class="a" style="left:167px;top:284px;width:812px;height:30px;background:#c0c0c0"></div>
<div class="a" style="left:167px;top:314px;width:812px;height:1px;background:#a8a8a8"></div>
<div class="a" style="left:209px;top:284px;width:2px;height:30px;background:#b0b0b0"></div>
<div class="cb" style="left:183px;top:294px"></div>
<div class="t k" style="left:212px;top:295px;font-size:10.1px;color:#1e1e1e">Objectives of the market study;</div>
<div class="a" style="left:167px;top:315px;width:812px;height:30px;background:#fff"></div>
<div class="a" style="left:167px;top:345px;width:812px;height:1px;background:#a8a8a8"></div>
<div class="a" style="left:209px;top:315px;width:2px;height:30px;background:#c8c8c8"></div>
<div class="cb" style="left:183px;top:325px"></div>
<div class="t k" style="left:212px;top:326px;font-size:10.1px;color:#1e1e1e">Business problems to be addressed with a help of results of the market study;</div>
<div class="a" style="left:167px;top:346px;width:812px;height:30px;background:#c0c0c0"></div>
<div class="a" style="left:167px;top:376px;width:812px;height:1px;background:#a8a8a8"></div>
<div class="a" style="left:209px;top:346px;width:2px;height:30px;background:#b0b0b0"></div>
<div class="cb" style="left:183px;top:356px"></div>
<div class="t k" style="left:212px;top:357px;font-size:10.1px;color:#1e1e1e">Types of recommendations and solutions to be delivered after the study;</div>
<div class="a" style="left:167px;top:377px;width:812px;height:30px;background:#fff"></div>
<div class="a" style="left:167px;top:407px;width:812px;height:1px;background:#a8a8a8"></div>
<div class="a" style="left:209px;top:377px;width:2px;height:30px;background:#c8c8c8"></div>
<div class="cb" style="left:183px;top:387px"></div>
<div class="t k" style="left:212px;top:388px;font-size:10.1px;color:#1e1e1e">The benefits to be obtained by learning results of the study;</div>
<div class="a" style="left:167px;top:408px;width:812px;height:30px;background:#c0c0c0"></div>
<div class="a" style="left:167px;top:438px;width:812px;height:1px;background:#a8a8a8"></div>
<div class="a" style="left:209px;top:408px;width:2px;height:30px;background:#b0b0b0"></div>
<div class="cb" style="left:183px;top:418px"></div>
<div class="t k" style="left:212px;top:419px;font-size:10.1px;color:#1e1e1e">Methods of data collection and methods of data interpretation;</div>
<div class="a" style="left:167px;top:439px;width:812px;height:30px;background:#fff"></div>
<div class="a" style="left:167px;top:469px;width:812px;height:1px;background:#a8a8a8"></div>
<div class="a" style="left:209px;top:439px;width:2px;height:30px;background:#c8c8c8"></div>
<div class="cb" style="left:183px;top:449px"></div>
<div class="t k" style="left:212px;top:450px;font-size:10.1px;color:#1e1e1e">Procedure for data analysis and decision-making;</div>
<div class="a" style="left:167px;top:470px;width:812px;height:30px;background:#c0c0c0"></div>
<div class="a" style="left:167px;top:500px;width:812px;height:1px;background:#a8a8a8"></div>
<div class="a" style="left:209px;top:470px;width:2px;height:30px;background:#b0b0b0"></div>
<div class="cb" style="left:183px;top:480px"></div>
<div class="t k" style="left:212px;top:481px;font-size:10.1px;color:#1e1e1e">A template or document to summarize and deliver results of the study;</div>
<div class="a" style="left:156px;top:501px;width:823px;height:16px;background:#808080"></div>
<div class="a" style="left:159px;top:506px;width:7px;height:7px;background:#f4f4f4;border:1px solid #d0d0d0"></div>
<div class="a" style="left:160px;top:509px;width:5px;height:1px;background:#8a8a8a"></div>
<div class="t k" style="left:170px;top:505px;font-size:10.1px;color:#c8c8c8">Category: 2. Areas to be studied</div>
<div class="a" style="left:156px;top:517px;width:11px;height:238px;background:#7c7c7c"></div>
<div class="a" style="left:167px;top:517px;width:812px;height:31px;background:#c0c0c0"></div>
<div class="a" style="left:167px;top:548px;width:812px;height:1px;background:#a8a8a8"></div>
<div class="a" style="left:209px;top:517px;width:2px;height:31px;background:#b0b0b0"></div>
<div class="cb" style="left:183px;top:527px"></div>
<div class="t k" style="left:212px;top:528px;font-size:10.1px;color:#1e1e1e">The Structure of the Market:</div>
<div class="t k" style="left:183px;top:552.6px;font-size:10px;color:#761a7c">o</div>
<div class="t k" style="left:227px;top:552.6px;font-size:10px;color:#761a7c">Market size and key market sectors;</div>
<div class="t k" style="left:183px;top:564.9px;font-size:10px;color:#761a7c">o</div>
<div class="t k" style="left:227px;top:564.9px;font-size:10px;color:#761a7c">Branding (market brand shares);</div>
<div class="t k" style="left:183px;top:577.2px;font-size:10px;color:#761a7c">o</div>
<div class="t k" style="left:227px;top:577.2px;font-size:10px;color:#761a7c">Seasonality of market;</div>
<div class="t k" style="left:183px;top:589.5px;font-size:10px;color:#761a7c">o</div>
<div class="t k" style="left:227px;top:589.5px;font-size:10px;color:#761a7c">Level of competition (a fair one or somehow regulated);</div>
<div class="t k" style="left:183px;top:601.8000000000001px;font-size:10px;color:#761a7c">o</div>
<div class="t k" style="left:227px;top:601.8000000000001px;font-size:10px;color:#761a7c">Presence of tariff barriers or other regulations;</div>
<div class="t k" style="left:183px;top:614.1px;font-size:10px;color:#761a7c">o</div>
<div class="t k" style="left:227px;top:614.1px;font-size:10px;color:#761a7c">Shares by channels of distribution;</div>
<div class="a" style="left:167px;top:627px;width:812px;height:1px;background:#a8a8a8"></div>
<div class="a" style="left:167px;top:628px;width:812px;height:30px;background:#fff"></div>
<div class="a" style="left:167px;top:658px;width:812px;height:1px;background:#a8a8a8"></div>
<div class="a" style="left:209px;top:628px;width:2px;height:30px;background:#c8c8c8"></div>
<div class="cb" style="left:183px;top:638px"></div>
<div class="t k" style="left:212px;top:639px;font-size:10.1px;color:#1e1e1e">Industry Profile:</div>
<div class="t k" style="left:183px;top:663.0px;font-size:10px;color:#761a7c">o</div>
<div class="t k" style="left:227px;top:663.0px;font-size:10px;color:#761a7c">Current size of industry and its growth potential;</div>
<div class="t k" style="left:183px;top:675.32px;font-size:10px;color:#761a7c">o</div>
<div class="t k" style="left:227px;top:675.32px;font-size:10px;color:#761a7c">Seasonal industry trends;</div>
<div class="t k" style="left:183px;top:687.64px;font-size:10px;color:#761a7c">o</div>
<div class="t k" style="left:227px;top:687.64px;font-size:10px;color:#761a7c">Economic trends and government policies;</div>
<div class="t k" style="left:183px;top:699.96px;font-size:10px;color:#761a7c">o</div>
<div class="t k" style="left:227px;top:699.96px;font-size:10px;color:#761a7c">Preferred distribution channels;</div>
<div class="t k" style="left:183px;top:712.28px;font-size:10px;color:#761a7c">o</div>
<div class="t k" style="left:227px;top:712.28px;font-size:10px;color:#761a7c">International relations;</div>
<div class="t k" style="left:183px;top:724.6px;font-size:10px;color:#761a7c">o</div>
<div class="t k" style="left:227px;top:724.6px;font-size:10px;color:#761a7c">Norms on profitability;</div>
<div class="t k" style="left:183px;top:736.92px;font-size:10px;color:#761a7c">o</div>
<div class="t k" style="left:227px;top:736.92px;font-size:10px;color:#761a7c">Taxation (stimulant or suppressing);</div>
<div class="t k" style="left:183px;top:749.24px;font-size:10px;color:#761a7c">o</div>
<div class="t k" style="left:227px;top:749.24px;font-size:10px;color:#761a7c">Level and share of innovative technologies;</div>
<div class="a" style="left:979px;top:193px;width:13px;height:562px;background:linear-gradient(90deg,#e4e4e4,#f4f4f4 40%,#f0f0f0)"></div>
<div class="a" style="left:979px;top:193px;width:13px;height:15px;background:linear-gradient(90deg,#f0f0f0,#fcfcfc);border:1px solid #e0e0e0"></div>
<div class="arr" style="left:982px;top:198px;border-top:none;border-bottom:3px solid #505050;border-left-width:3.5px;border-right-width:3.5px"></div>
<div class="a" style="left:980px;top:209px;width:12px;height:342px;border:1px solid #b8b8b8;border-radius:2px;background:linear-gradient(90deg,#f4f4f4,#e4e4e4 50%,#d0d0d0)"></div>
<div class="a" style="left:983px;top:377px;width:6px;height:1px;background:#7a7a7a"></div>
<div class="a" style="left:983px;top:379px;width:6px;height:1px;background:#7a7a7a"></div>
<div class="a" style="left:983px;top:381px;width:6px;height:1px;background:#7a7a7a"></div>
<div class="arr" style="left:982px;top:747px;border-top:3px solid #707070;border-left-width:3.5px;border-right-width:3.5px"></div>
<div class="a" style="left:0px;top:55px;width:717px;height:2px;background:#c8ccd6"></div>
<div class="a" style="left:0px;top:57px;width:717px;height:2px;background:#7a7a7a"></div>
<div class="a" style="left:717px;top:56px;width:277px;height:2px;background:#000"></div>
<div class="a" style="left:154px;top:57px;width:2px;height:699px;background:linear-gradient(#1a1a1a,#3a3a3a 30%,#4a4a4a)"></div>
<div class="a" style="left:0px;top:754px;width:994px;height:3px;background:linear-gradient(#c0c0c0,#b8b8b8 50%,#d8d8d8)"></div>
<div class="a" style="left:0px;top:754px;width:155px;height:2px;background:#555"></div>
<div class="a" style="left:0px;top:757px;width:994px;height:11px;background:linear-gradient(#eeebea 0,#ece9e8 80%,#f4f2f2 90%,#e4e2e2 100%)"></div>
<div class="t " style="left:794px;top:749px;font-family:'Liberation Mono',monospace;font-size:16.3px;font-weight:bold;color:#3a0808;letter-spacing:0px;transform:scaleY(0.9);transform-origin:0 100%">www.todolistsoft.com</div>
</body></html>
